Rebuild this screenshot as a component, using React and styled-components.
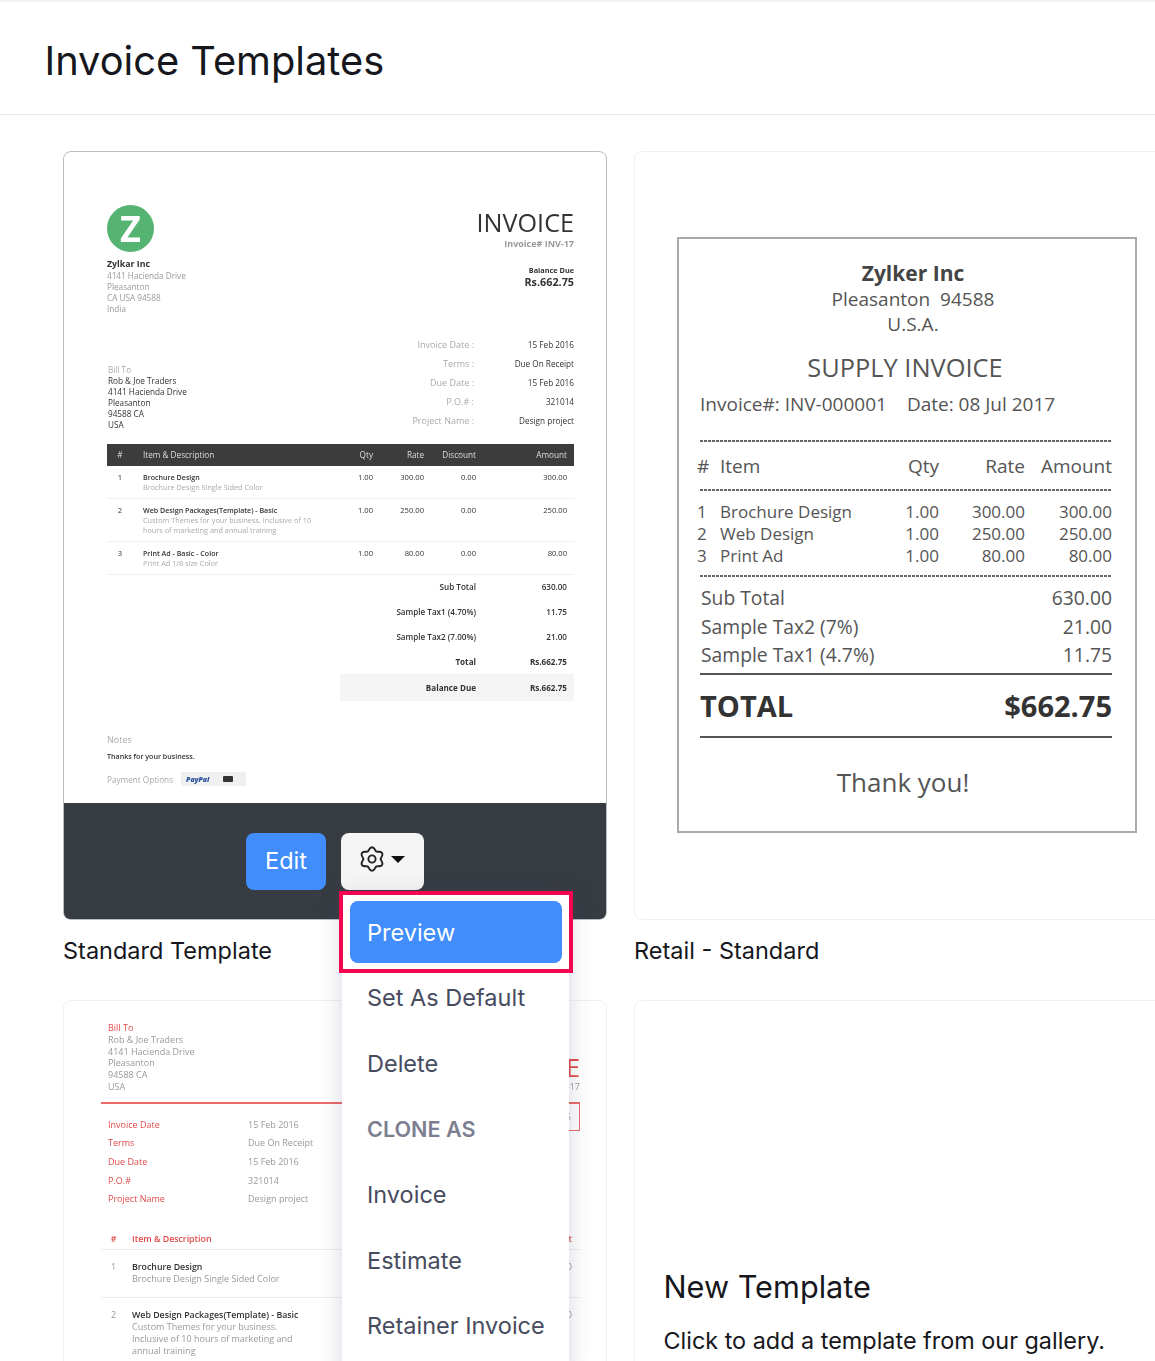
import styled, { createGlobalStyle } from "styled-components";

const GlobalStyle = createGlobalStyle`
  html, body {
    margin: 0;
    padding: 0;
    width: 1155px;
    height: 1361px;
    overflow: hidden;
    background: #fff;
    font-family: "Inter", "Liberation Sans", sans-serif;
    color: #16171c;
  }
  * { box-sizing: border-box; }
`;

// PAGE
const Page = styled.div`
  width: 1155px;
  height: 1361px;
  overflow: hidden;
  border-top: 2px solid #f1f1f1;
`;
const Header = styled.header`
  height: 113px;
  display: flex;
  align-items: center;
  padding: 4px 0 0 44.5px;
  border-bottom: 1px solid #e9e9ec;
`;
const Title = styled.h1`
  margin: 0;
  font-size: 39.8px;
  font-weight: 400;
`;
const Gallery = styled.div`
  display: grid;
  grid-template-columns: 544px 544px;
  column-gap: 27px;
  padding: 36px 0 0 63px;
`;
const Column = styled.div`
  display: flex;
  flex-direction: column;
`;
const Card = styled.div`
  position: relative;
  height: 769px;
  display: flex;
  flex-direction: column;
  border-radius: 8px;
  background: #fff;
  border: 1px solid ${(p) => (p.$active ? "#b9bcc4" : "#f1f1f3")};
`;
const CardLabel = styled.div`
  height: 80px;
  padding-top: 16px;
  font-size: 23.5px;
  line-height: 30px;
`;

// HOVER FOOTER AND MENU
const Footer = styled.div`
  height: 116px;
  flex: none;
  display: flex;
  justify-content: center;
  gap: 15px;
  padding-top: 30px;
  background: #373b42;
  border-radius: 0 0 6px 6px;
`;
const EditButton = styled.button`
  width: 80px;
  height: 57px;
  padding: 0 0 2px;
  border: none;
  border-radius: 8px;
  background: #408dfb;
  color: #fff;
  font: 400 23.5px "Inter", sans-serif;
`;
const GearButton = styled.button`
  width: 83px;
  height: 57px;
  display: flex;
  align-items: center;
  justify-content: center;
  gap: 6px;
  padding: 0 2px 5px 0;
  border: none;
  border-radius: 8px;
  background: #f5f5f5;
`;
const Caret = styled.span`
  width: 0;
  height: 0;
  border-left: 7px solid transparent;
  border-right: 7px solid transparent;
  border-top: 7px solid #111;
`;
const Menu = styled.div`
  position: absolute;
  z-index: 5;
  left: 278px;
  top: 741px;
  width: 227px;
  height: 480px;
  background: #fff;
  box-shadow: 0 4px 22px rgba(70, 74, 110, 0.22);
`;
const Highlight = styled.div`
  margin: -2px -4px -8px -3px;
  padding: 6px 7px;
  border: 4px solid #f5054f;
  background: #fff;
  position: relative;
`;
const PreviewItem = styled.div`
  height: 62px;
  display: flex;
  align-items: center;
  padding-left: 17px;
  border-radius: 8px;
  background: #408dfb;
  color: #fff;
  font-size: 23.5px;
`;
const MenuItem = styled.div`
  height: 65.6px;
  display: flex;
  align-items: center;
  padding-left: 25px;
  font-size: ${(p) => (p.$heading ? 21.6 : 23.5)}px;
  color: ${(p) => (p.$heading ? "#7d7f90" : "#474b5e")};
  font-weight: ${(p) => (p.$heading ? 600 : 400)};
`;

// STANDARD INVOICE THUMBNAIL
const Paper = styled.div`
  flex: 1;
  min-height: 0;
  overflow: hidden;
  padding: 53px 32px 0 43px;
  font-family: "Open Sans", sans-serif;
  font-size: 7.6px;
  color: #333;
  filter: blur(0.4px);
`;
const PaperTop = styled.div`
  display: flex;
  justify-content: space-between;
`;
const Logo = styled.div`
  width: 47px;
  height: 47px;
  margin-bottom: 7px;
  display: flex;
  align-items: center;
  justify-content: center;
  border-radius: 50%;
  background: #56b473;
  color: #fff;
  font-size: 36px;
  font-weight: 700;
  line-height: 1;
`;
const Lines = styled.div`
  line-height: ${(p) => p.$lh || 11}px;
  color: ${(p) => p.$color || "#999"};
  font-size: ${(p) => p.$size || 8.2}px;
`;
const Strong = styled.div`
  font-weight: 700;
  font-size: 8.8px;
  color: ${(p) => p.$color || "#333"};
`;
const Right = styled.div`
  padding-top: 3px;
  text-align: right;
`;
const InvoiceWord = styled.div`
  font-size: 25.2px;
  line-height: 28px;
  color: ${(p) => p.$color || "#333"};
`;
const InvoiceNo = styled.div`
  margin-top: 2px;
  font-size: 9px;
  line-height: 12px;
  font-weight: 700;
  color: #999;
`;
const RedInvoiceNo = styled(InvoiceNo)`
  margin-top: 0;
  font-weight: 400;
`;
const BalanceLabel = styled.div`
  margin-top: 15px;
  font-size: 7.3px;
  line-height: 10px;
  font-weight: 700;
`;
const BalanceValue = styled.div`
  margin-top: 1px;
  font-size: 10.8px;
  line-height: 12px;
  font-weight: 700;
`;
const BillRow = styled.div`
  margin-top: 22px;
  display: flex;
  justify-content: space-between;
  align-items: flex-end;
`;
const BillBlock = styled(Lines)`
  padding-left: 1px;
  margin-bottom: 1px;
`;
const Meta = styled.div`
  display: grid;
  grid-template-columns: 130px 100px;
  align-items: center;
  line-height: 18.9px;
  text-align: right;
  color: #333;
  font-size: 8.2px;
`;
const MetaLabel = styled.span`
  color: #aaa;
  font-size: ${(p) => p.$size || 9}px;
`;
const TableHead = styled.div`
  margin-top: 13px;
  height: 22px;
  display: grid;
  grid-template-columns: 36px 1fr 40px 51px 52px 98px;
  align-items: center;
  background: #3c3c3c;
  color: #ddd;
  text-align: right;
  font-size: 8.2px;
`;
const ItemRow = styled.div`
  display: grid;
  grid-template-columns: 36px 1fr 40px 51px 52px 98px;
  padding: 6px 0;
  line-height: 10px;
  text-align: right;
  border-bottom: 1px solid #f0f0f0;
`;
const NumCell = styled.span`
  padding-right: 10px;
  text-align: center;
`;
const ItemCell = styled.div`
  text-align: left;
`;
const ItemTitle = styled.div`
  font-weight: 600;
  color: #333;
  font-size: ${(p) => p.$size || 7.1}px;
`;
const ItemDesc = styled.div`
  color: #aaa;
  font-size: 7.3px;
`;
const AmountCell = styled.span`
  padding-right: 7px;
`;
const Totals = styled.div`
  margin-left: auto;
  width: 234px;
  font-size: 8.1px;
`;
const TotalRow = styled.div`
  height: ${(p) => (p.$band ? 27.5 : 24.75)}px;
  display: grid;
  grid-template-columns: 1fr 98px;
  align-items: center;
  text-align: right;
  font-weight: ${(p) => (p.$bold ? 700 : 600)};
  background: ${(p) => (p.$band ? "#f5f5f5" : "transparent")};
`;
const Notes = styled.div`
  margin-top: 33px;
  line-height: 12px;
  font-size: 9px;
  color: #aaa;
`;
const Thanks = styled.div`
  margin-top: 4px;
  line-height: 12px;
  font-size: 7.1px;
  font-weight: 600;
`;
const PaymentRow = styled.div`
  margin-top: 10px;
  display: flex;
  align-items: center;
  gap: 8px;
  font-size: 8.2px;
  color: #aaa;
`;
const PayBadge = styled.div`
  width: 65px;
  height: 14px;
  display: flex;
  align-items: center;
  gap: 14px;
  padding-left: 5px;
  background: #eef0f2;
`;
const PayPal = styled.span`
  font-style: italic;
  font-weight: 800;
  font-size: 7px;
  color: #2a4f9b;
`;
const CardChip = styled.span`
  width: 10px;
  height: 6px;
  border-radius: 1px;
  background: #333;
`;

// RETAIL RECEIPT
const RetailWrap = styled.div`
  padding: 85px 0 0 42px;
`;
const Receipt = styled.div`
  width: 460px;
  height: 596px;
  padding-top: 21px;
  border: 2px solid #a9a9a9;
  font-family: "Open Sans", sans-serif;
  font-size: 19px;
  color: #555;
`;
const Centered = styled.div`
  text-align: center;
  padding-left: ${(p) => p.$shift || 0}px;
  padding-right: ${(p) => p.$back || 0}px;
  margin-top: ${(p) => p.$top || 0}px;
  line-height: ${(p) => p.$lh}px;
  font-size: ${(p) => p.$size || 19}px;
  font-weight: ${(p) => p.$weight || 400};
  color: ${(p) => p.$color || "#555"};
`;
const InvoiceLine = styled.div`
  margin-top: 9px;
  padding-left: 21px;
  display: flex;
  gap: 20px;
  line-height: 24px;
`;
const Rule = styled.div`
  height: 2px;
  margin: ${(p) => p.$top}px 23px 0 21px;
  background: ${(p) =>
    p.$solid ? "#555" : "repeating-linear-gradient(90deg, #666 0 3px, transparent 3px 4px)"};
`;
const ReceiptGrid = styled.div`
  margin-top: ${(p) => p.$top}px;
  padding: 0 23px 0 18px;
  display: grid;
  grid-template-columns: 23px 1fr 80px 86px 87px;
  line-height: ${(p) => p.$lh}px;
  font-size: ${(p) => p.$size || 19}px;
  text-align: right;
`;
const LeftCell = styled.span`
  text-align: left;
`;
const SummaryRow = styled.div`
  padding: 0 23px 0 22px;
  display: flex;
  justify-content: space-between;
  line-height: 28.5px;
  font-size: 19.3px;
  margin-top: ${(p) => p.$top || 0}px;
`;
const TotalLine = styled.div`
  margin-top: 13px;
  padding: 0 23px 0 21px;
  display: flex;
  justify-content: space-between;
  font-size: 29px;
  font-weight: 700;
  line-height: 36px;
  color: #333;
`;

// RED INVOICE THUMBNAIL
const RedPaper = styled.div`
  flex: 1;
  overflow: hidden;
  padding: 21px 26px 0 37px;
  font-family: "Open Sans", sans-serif;
  font-size: 9px;
  color: #999;
  filter: blur(0.4px);
`;
const RedTop = styled.div`
  display: flex;
  justify-content: space-between;
  align-items: flex-end;
  padding-left: 7px;
`;
const RedMiddle = styled.div`
  display: flex;
  justify-content: space-between;
  border-top: 2px solid #ec6a6a;
  margin-top: 9px;
`;
const RedMeta = styled.div`
  margin-top: 12px;
  padding-left: 7px;
  display: grid;
  grid-template-columns: 140px 100px;
  line-height: 18.6px;
`;
const RedLabel = styled.span`
  color: #e04a4a;
`;
const AmountBox = styled.div`
  width: 120px;
  height: 27px;
  padding-right: 8px;
  display: flex;
  align-items: center;
  justify-content: flex-end;
  border: 1px solid #ec6a6a;
  border-top: none;
`;
const RedHead = styled.div`
  margin-top: 21px;
  height: 20px;
  display: grid;
  grid-template-columns: 31px 1fr 60px;
  align-items: center;
  border-bottom: 1px solid #eee;
  color: #e04a4a;
  font-size: 8.8px;
  font-weight: 600;
`;
const RedRow = styled.div`
  display: grid;
  grid-template-columns: 31px 1fr 60px;
  padding: 11px 0 12px;
  line-height: 12px;
  border-bottom: 1px solid #eee;
`;
const RightCell = styled.span`
  text-align: right;
  padding-right: 8px;
`;
const CenterCell = styled.span`
  padding-right: 6px;
  text-align: center;
`;

// NEW TEMPLATE
const NewBody = styled.div`
  padding: 267px 0 0 28.5px;
`;
const NewTitle = styled.div`
  font-size: 30.7px;
  line-height: 38px;
`;
const NewText = styled.div`
  margin-top: 20px;
  font-size: 23.4px;
  line-height: 30px;
  white-space: nowrap;
`;

const GearIcon = () => {
  // six soft lobes round a small ring
  const pts = [];
  for (let i = 0; i < 72; i++) {
    const a = (i / 72) * Math.PI * 2;
    const r = 10.2 + 1.5 * Math.cos(6 * a);
    pts.push(`${(13 + r * Math.sin(a)).toFixed(2)},${(13 - r * Math.cos(a)).toFixed(2)}`);
  }
  return (
    <svg width="26" height="26" viewBox="0 0 26 26" fill="none" stroke="#222" strokeWidth="1.9">
      <polygon points={pts.join(" ")} strokeLinejoin="round" />
      <circle cx="13" cy="13" r="3.6" />
    </svg>
  );
};

const items = [
  { n: 1, title: "Brochure Design", desc: ["Brochure Design Single Sided Color"], rate: "300.00" },
  {
    n: 2,
    title: "Web Design Packages(Template) - Basic",
    desc: ["Custom Themes for your business. Inclusive of 10", "hours of marketing and annual training"],
    rate: "250.00",
  },
  { n: 3, title: "Print Ad - Basic - Color", desc: ["Print Ad 1/8 size Color"], rate: "80.00" },
];

const StandardInvoice = () => (
  <Paper>
    <PaperTop>
      <div>
        <Logo>Z</Logo>
        <Lines>
          <Strong>Zylkar Inc</Strong>
          <div>4141 Hacienda Drive</div>
          <div>Pleasanton</div>
          <div>CA USA 94588</div>
          <div>India</div>
        </Lines>
      </div>
      <Right>
        <InvoiceWord>INVOICE</InvoiceWord>
        <InvoiceNo>Invoice# INV-17</InvoiceNo>
        <BalanceLabel>Balance Due</BalanceLabel>
        <BalanceValue>Rs.662.75</BalanceValue>
      </Right>
    </PaperTop>
    <BillRow>
      <BillBlock $color="#333">
        <MetaLabel $size={8.2}>Bill To</MetaLabel>
        <div>Rob &amp; Joe Traders</div>
        <div>4141 Hacienda Drive</div>
        <div>Pleasanton</div>
        <div>94588 CA</div>
        <div>USA</div>
      </BillBlock>
      <Meta>
        <MetaLabel>Invoice Date :</MetaLabel>
        <span>15 Feb 2016</span>
        <MetaLabel>Terms :</MetaLabel>
        <span>Due On Receipt</span>
        <MetaLabel>Due Date :</MetaLabel>
        <span>15 Feb 2016</span>
        <MetaLabel>P.O.# :</MetaLabel>
        <span>321014</span>
        <MetaLabel>Project Name :</MetaLabel>
        <span>Design project</span>
      </Meta>
    </BillRow>
    <TableHead>
      <NumCell>#</NumCell>
      <ItemCell>Item &amp; Description</ItemCell>
      <span>Qty</span>
      <span>Rate</span>
      <span>Discount</span>
      <AmountCell>Amount</AmountCell>
    </TableHead>
    {items.map((it) => (
      <ItemRow key={it.n}>
        <NumCell>{it.n}</NumCell>
        <ItemCell>
          <ItemTitle>{it.title}</ItemTitle>
          {it.desc.map((d) => (
            <ItemDesc key={d}>{d}</ItemDesc>
          ))}
        </ItemCell>
        <span>1.00</span>
        <span>{it.rate}</span>
        <span>0.00</span>
        <AmountCell>{it.rate}</AmountCell>
      </ItemRow>
    ))}
    <Totals>
      <TotalRow>
        <span>Sub Total</span>
        <AmountCell>630.00</AmountCell>
      </TotalRow>
      <TotalRow>
        <span>Sample Tax1 (4.70%)</span>
        <AmountCell>11.75</AmountCell>
      </TotalRow>
      <TotalRow>
        <span>Sample Tax2 (7.00%)</span>
        <AmountCell>21.00</AmountCell>
      </TotalRow>
      <TotalRow $bold>
        <span>Total</span>
        <AmountCell>Rs.662.75</AmountCell>
      </TotalRow>
      <TotalRow $bold $band>
        <span>Balance Due</span>
        <AmountCell>Rs.662.75</AmountCell>
      </TotalRow>
    </Totals>
    <Notes>Notes</Notes>
    <Thanks>Thanks for your business.</Thanks>
    <PaymentRow>
      Payment Options
      <PayBadge>
        <PayPal>PayPal</PayPal>
        <CardChip />
      </PayBadge>
    </PaymentRow>
  </Paper>
);

const RetailReceipt = () => (
  <RetailWrap>
    <Receipt>
      <Centered $shift={12} $lh={26} $size={21} $weight={700} $color="#444">
        Zylker Inc
      </Centered>
      <Centered $shift={12} $lh={26}>
        Pleasanton&nbsp; 94588
      </Centered>
      <Centered $shift={12} $lh={24}>
        U.S.A.
      </Centered>
      <Centered $top={15} $lh={32} $size={25.4} $back={4}>
        SUPPLY INVOICE
      </Centered>
      <InvoiceLine>
        <span>Invoice#: INV-000001</span>
        <span>Date: 08 Jul 2017</span>
      </InvoiceLine>
      <Rule $top={24} />
      <ReceiptGrid $top={12} $lh={24}>
        <LeftCell>#</LeftCell>
        <LeftCell>Item</LeftCell>
        <span>Qty</span>
        <span>Rate</span>
        <span>Amount</span>
      </ReceiptGrid>
      <Rule $top={11} />
      <ReceiptGrid $top={10} $lh={22} $size={17}>
        <LeftCell>1</LeftCell>
        <LeftCell>Brochure Design</LeftCell>
        <span>1.00</span>
        <span>300.00</span>
        <span>300.00</span>
        <LeftCell>2</LeftCell>
        <LeftCell>Web Design</LeftCell>
        <span>1.00</span>
        <span>250.00</span>
        <span>250.00</span>
        <LeftCell>3</LeftCell>
        <LeftCell>Print Ad</LeftCell>
        <span>1.00</span>
        <span>80.00</span>
        <span>80.00</span>
      </ReceiptGrid>
      <Rule $top={8} />
      <SummaryRow $top={7}>
        <span>Sub Total</span>
        <span>630.00</span>
      </SummaryRow>
      <SummaryRow>
        <span>Sample Tax2 (7%)</span>
        <span>21.00</span>
      </SummaryRow>
      <SummaryRow>
        <span>Sample Tax1 (4.7%)</span>
        <span>11.75</span>
      </SummaryRow>
      <Rule $top={3} $solid />
      <TotalLine>
        <span>TOTAL</span>
        <span>$662.75</span>
      </TotalLine>
      <Rule $top={12} $solid />
      <Centered $top={27} $lh={34} $size={26} $back={8}>
        Thank you!
      </Centered>
    </Receipt>
  </RetailWrap>
);

const RedInvoice = () => (
  <RedPaper>
    <RedTop>
      <Lines $lh={11.8} $size={9}>
        <RedLabel>Bill To</RedLabel>
        <div>Rob &amp; Joe Traders</div>
        <div>4141 Hacienda Drive</div>
        <div>Pleasanton</div>
        <div>94588 CA</div>
        <div>USA</div>
      </Lines>
      <Right>
        <InvoiceWord $color="#e04a4a">INVOICE</InvoiceWord>
        <RedInvoiceNo>Invoice# INV-17</RedInvoiceNo>
      </Right>
    </RedTop>
    <RedMiddle>
      <RedMeta>
        <RedLabel>Invoice Date</RedLabel>
        <span>15 Feb 2016</span>
        <RedLabel>Terms</RedLabel>
        <span>Due On Receipt</span>
        <RedLabel>Due Date</RedLabel>
        <span>15 Feb 2016</span>
        <RedLabel>P.O.#</RedLabel>
        <span>321014</span>
        <RedLabel>Project Name</RedLabel>
        <span>Design project</span>
      </RedMeta>
      <AmountBox>Rs.662.75</AmountBox>
    </RedMiddle>
    <RedHead>
      <CenterCell>#</CenterCell>
      <span>Item &amp; Description</span>
      <RightCell>Amount</RightCell>
    </RedHead>
    <RedRow>
      <CenterCell>1</CenterCell>
      <div>
        <ItemTitle $size={8.8}>Brochure Design</ItemTitle>
        <div>Brochure Design Single Sided Color</div>
      </div>
      <RightCell>300.00</RightCell>
    </RedRow>
    <RedRow>
      <CenterCell>2</CenterCell>
      <div>
        <ItemTitle $size={8.8}>Web Design Packages(Template) - Basic</ItemTitle>
        <div>Custom Themes for your business.</div>
        <div>Inclusive of 10 hours of marketing and</div>
        <div>annual training</div>
      </div>
      <RightCell>250.00</RightCell>
    </RedRow>
  </RedPaper>
);

const App = () => (
  <Page>
    <GlobalStyle />
    <Header>
      <Title>Invoice Templates</Title>
    </Header>
    <Gallery>
      <Column>
        <Card $active>
          <StandardInvoice />
          <Footer>
            <EditButton>Edit</EditButton>
            <GearButton>
              <GearIcon />
              <Caret />
            </GearButton>
          </Footer>
          <Menu>
            <Highlight>
              <PreviewItem>Preview</PreviewItem>
            </Highlight>
            <MenuItem>Set As Default</MenuItem>
            <MenuItem>Delete</MenuItem>
            <MenuItem $heading>CLONE AS</MenuItem>
            <MenuItem>Invoice</MenuItem>
            <MenuItem>Estimate</MenuItem>
            <MenuItem>Retainer Invoice</MenuItem>
          </Menu>
        </Card>
        <CardLabel>Standard Template</CardLabel>
      </Column>
      <Column>
        <Card>
          <RetailReceipt />
        </Card>
        <CardLabel>Retail - Standard</CardLabel>
      </Column>
      <Column>
        <Card>
          <RedInvoice />
        </Card>
      </Column>
      <Column>
        <Card>
          <NewBody>
            <NewTitle>New Template</NewTitle>
            <NewText>Click to add a template from our gallery.</NewText>
          </NewBody>
        </Card>
      </Column>
    </Gallery>
  </Page>
);

export default App;
